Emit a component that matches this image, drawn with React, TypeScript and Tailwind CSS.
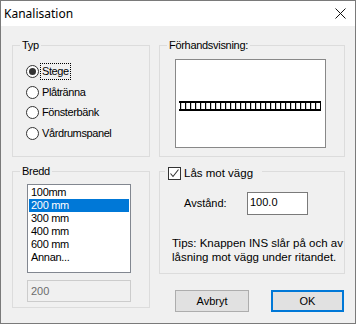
import React from 'react'

const body = { fontFamily: '"Liberation Sans", Arial, sans-serif' }

function Group({ label, className, children }: { label: React.ReactNode; className: string; children?: React.ReactNode }) {
  return (
    <div className={`relative border border-[#dcdcdc] ${className}`}>
      <div className="absolute -top-[7px] left-[7px] px-[2px] bg-[#f0f0f0] h-[13px] leading-[13px] tracking-[-0.3px]">{label}</div>
      {children}
    </div>
  )
}

function Radio({ label, checked, h }: { label: string; checked?: boolean; h: string }) {
  return (
    <div className={`flex items-center ${h}`}>
      <div className="w-[13px] h-[13px] rounded-full border border-[#333] bg-white flex items-center justify-center">
        {checked && <div className="w-[7px] h-[7px] rounded-full bg-[#333]" />}
      </div>
      <span
        className={`ml-[1px] px-[1px] h-[17px] leading-[15px] tracking-[-0.4px] border ${checked ? 'border-dotted border-black' : 'border-transparent'}`}
      >
        {label}
      </span>
    </div>
  )
}

function Ladder() {
  const rungs = Array.from({ length: 29 }, (_, i) => 1 + i * 5)
  return (
    <svg width="142" height="10" viewBox="0 0 142 10">
      <rect x="0" y="0" width="142" height="2" fill="#000" />
      <rect x="0" y="8" width="142" height="2" fill="#000" />
      {rungs.map((x) => (
        <rect key={x} x={x} y="0" width="1.2" height="10" fill="#000" />
      ))}
    </svg>
  )
}

export default function App() {
  const widths = ['100mm', '200 mm', '300 mm', '400 mm', '600 mm', 'Annan...']
  return (
    <div className="w-[356px] h-[324px] border border-[#7a7a7a] flex flex-col bg-[#f0f0f0] text-[11px] text-black" style={body}>
      <div className="h-[25px] bg-white flex items-center justify-between pl-[3px] pr-[9px]">
        <span className="text-[12px] leading-[16px]" style={{ fontFamily: '"Noto Sans", "Open Sans", sans-serif' }}>
          Kanalisation
        </span>
        <svg width="11" height="11" viewBox="0 0 11 11">
          <path d="M0.5 0.5 L10.5 10.5 M10.5 0.5 L0.5 10.5" stroke="#111" strokeWidth="1" />
        </svg>
      </div>

      <div className="flex-1 pt-[19px] pl-[11px] flex gap-[9px]">
        <div className="w-[138px] flex flex-col">
          <Group label="Typ" className="h-[112px] pt-[15px] pl-[13px]">
            <Radio label="Stege" checked h="h-[21px]" />
            <Radio label="Plåtränna" h="h-[20px]" />
            <Radio label="Fönsterbänk" h="h-[21px]" />
            <Radio label="Vårdrumspanel" h="h-[21px]" />
          </Group>
          <Group label="Bredd" className="mt-[14px] h-[137px] pt-[12px] pl-[14px]">
            <div className="w-[104px] h-[89px] border border-[#828790] bg-white p-[1px] tracking-[-0.3px]">
              {widths.map((w) => (
                <div
                  key={w}
                  className={`h-[13px] leading-[13px] pl-[2px] ${w === '200 mm' ? 'bg-[#0078d7] text-white' : ''}`}
                >
                  {w}
                </div>
              ))}
            </div>
            <div className="mt-[7px] w-[104px] h-[22px] border border-[#cccccc] pl-[3px] flex items-center text-[#6d6d6d]">
              200
            </div>
          </Group>
        </div>

        <div className="w-[186px] flex flex-col">
          <Group label="Förhandsvisning:" className="h-[112px] pt-[13px] pl-[15px]">
            <div className="w-[151px] h-[89px] border border-[#888888] bg-white pl-[3px] pt-[41px]">
              <Ladder />
            </div>
          </Group>

          <div className="relative mt-[14px] h-[103px] border border-[#dcdcdc]">
            <div className="absolute -top-[5px] left-[5px] pl-[3px] pr-[9px] bg-[#f0f0f0] flex items-start">
              <div className="w-[13px] h-[13px] border border-[#333] bg-white flex items-center justify-center">
                <svg width="11" height="11" viewBox="0 0 11 11">
                  <path d="M1.5 5.5 L4 8.5 L9.5 1.5" stroke="#333" strokeWidth="1.1" fill="none" />
                </svg>
              </div>
              <span className="ml-[3px] leading-[13px] text-[11.5px]">Lås mot vägg</span>
            </div>
            <div className="mt-[20px] pl-[24px] flex items-center">
              <span className="w-[63px]">Avstånd:</span>
              <div className="w-[61px] h-[23px] border border-[#7a7a7a] bg-white pl-[2px] pt-[3px] leading-[13px]">100.0</div>
            </div>
            <div className="mt-[21px] pl-[12px] leading-[14px] whitespace-nowrap text-[11.5px]">
              Tips: Knappen INS slår på och av
              <br />
              låsning mot vägg under ritandet.
            </div>
          </div>

          <div className="mt-[16px] pl-[16px] flex gap-[22px]">
            <button className="w-[74px] h-[22px] bg-[#e1e1e1] border border-[#adadad] text-[11px]">Avbryt</button>
            <button className="w-[73px] h-[22px] bg-[#e1e1e1] border-2 border-[#0078d7] text-[11px]">OK</button>
          </div>
        </div>
      </div>
    </div>
  )
}
